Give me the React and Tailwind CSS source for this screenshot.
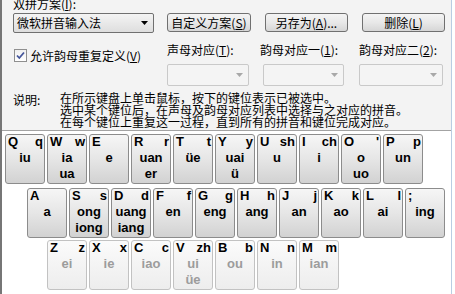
const cjk = "font-['Noto_Sans_CJK_SC',sans-serif]";

const row1 = [
  ["Q", "q", ["iu"]],
  ["W", "w", ["ia", "ua"]],
  ["E", "", ["e"]],
  ["R", "r", ["uan", "er"]],
  ["T", "t", ["üe"]],
  ["Y", "y", ["uai", "ü"]],
  ["U", "sh", ["u"]],
  ["I", "ch", ["i"]],
  ["O", "'", ["o", "uo"]],
  ["P", "p", ["un"]],
];
const row2 = [
  ["A", "", ["a"]],
  ["S", "s", ["ong", "iong"]],
  ["D", "d", ["uang", "iang"]],
  ["F", "f", ["en"]],
  ["G", "g", ["eng"]],
  ["H", "h", ["ang"]],
  ["J", "j", ["an"]],
  ["K", "k", ["ao"]],
  ["L", "l", ["ai"]],
  [";", "", ["ing"]],
];
const row3 = [
  ["Z", "z", ["ei"]],
  ["X", "x", ["ie"]],
  ["C", "c", ["iao"]],
  ["V", "zh", ["ui", "üe"]],
  ["B", "b", ["ou"]],
  ["N", "n", ["in"]],
  ["M", "m", ["ian"]],
];

const Key = ({ up, low, lines, faded }) => (
  <div
    className={
      faded
        ? "w-[40px] h-[50px] shrink-0 rounded-[3px] border border-[#c2c2c2] bg-linear-to-b from-[#fbfbfb] to-[#ededed] flex flex-col"
        : "w-[40px] h-[50px] shrink-0 rounded-[3px] border border-[#8c8c8c] bg-linear-to-b from-[#f6f6f6] via-[#e6e6e6] to-[#d2d2d2] flex flex-col"
    }
  >
    <div className="flex justify-between pl-[2px] pr-[1px] leading-[13px]">
      <span>{up}</span>
      <span>{low}</span>
    </div>
    <div
      className={
        faded
          ? "pt-[2px] flex flex-col items-center leading-[16px] text-[#9c9c9c]"
          : "pt-[2px] flex flex-col items-center leading-[16px]"
      }
    >
      {lines.map((l) => (
        <span key={l}>{l}</span>
      ))}
    </div>
  </div>
);

const Arrow = ({ color }) => (
  <svg width="7" height="4" viewBox="0 0 7 4">
    <path d="M0 0h7L3.5 4z" fill={color} />
  </svg>
);

const Btn = ({ children, w }) => (
  <div
    className={`${w} h-[19px] rounded-[3px] border border-[#707070] bg-linear-to-b from-[#f4f4f4] via-[#e8e8e8] to-[#d6d6d6] flex items-center justify-center leading-[12px]`}
  >
    {children}
  </div>
);

const DisabledCombo = ({ w }) => (
  <div
    className={`${w} h-[22px] mt-[8px] rounded-[2px] border border-[#c9c9c9] bg-[#f4f4f4] flex items-center justify-end pr-[5px]`}
  >
    <Arrow color="#a8a8a8" />
  </div>
);

const App = () => {
  return (
    <div className={`w-[455px] h-[294px] overflow-hidden bg-white text-[12px] text-black ${cjk}`}>
      <div className="w-[452px] h-[294px] border-l-2 border-l-[#767676] border-r border-r-[#b9cde3] flex flex-col">
        <div className="h-[130px] shrink-0 bg-[#f3f3f3] pl-[11px] flex flex-col">
          <div className="-mt-[2px] h-[12px] leading-[12px]">
            双拼方案(<span className="underline">I</span>):
          </div>
          <div className="mt-[3px] flex items-start">
            <div className="w-[141px] h-[20px] rounded-[2px] border border-[#707070] bg-linear-to-b from-[#f4f4f4] to-[#dedede] flex items-center justify-between pl-[3px] pr-[5px] leading-[12px]">
              <span>微软拼音输入法</span>
              <Arrow color="#000" />
            </div>
            <div className="ml-[13px] flex gap-[14px]">
              <Btn w="w-[84px]">
                自定义方案(<span className="underline">S</span>)
              </Btn>
              <Btn w="w-[83px]">
                另存为(<span className="underline">A</span>)...
              </Btn>
              <Btn w="w-[83px]">
                删除(<span className="underline">L</span>)
              </Btn>
            </div>
          </div>
          <div className="mt-[11px] flex items-start">
            <div className="w-[141px] mt-[5px] flex items-center gap-[3px] leading-[12px]">
              <div className="ml-[1px] w-[13px] h-[13px] border border-[#8f8f8f] bg-linear-to-b from-[#f0f0f0] to-[#ffffff] flex items-center justify-center">
                <svg width="9" height="9" viewBox="0 0 9 9">
                  <path d="M1 4.5l2.3 2.5L8 1.5" stroke="#44559a" strokeWidth="1.8" fill="none" />
                </svg>
              </div>
              <span>
                允许韵母重复定义(<span className="underline">V</span>)
              </span>
            </div>
            <div className="ml-[13px] flex gap-[14px]">
              <div className="w-[82px] flex flex-col">
                <div className="h-[12px] leading-[12px]">
                  声母对应(<span className="underline">T</span>):
                </div>
                <DisabledCombo w="w-[82px]" />
              </div>
              <div className="w-[82px] flex flex-col">
                <div className="h-[12px] leading-[12px] -ml-[3px]">
                  韵母对应一(<span className="underline">1</span>):
                </div>
                <DisabledCombo w="w-[81px]" />
              </div>
              <div className="w-[84px] flex flex-col">
                <div className="h-[12px] leading-[12px]">
                  韵母对应二(<span className="underline">2</span>):
                </div>
                <DisabledCombo w="w-[84px]" />
              </div>
            </div>
          </div>
          <div className="mt-[6px] flex leading-[12px]">
            <div className="w-[47px] mt-[2px]">说明:</div>
            <div className="flex flex-col">
              <span>在所示键盘上单击鼠标，按下的键位表示已被选中。</span>
              <span>选中某个键位后，在声母及韵母对应列表中选择与之对应的拼音。</span>
              <span>在每个键位上重复这一过程，直到所有的拼音和键位完成对应。</span>
            </div>
          </div>
        </div>
        <div className="flex-1 border-t border-t-[#a3a3a3] bg-white pt-[3px] flex flex-col font-['Liberation_Sans',Arial,sans-serif] font-bold text-[13px]">
          <div className="pl-[3px] flex gap-[2px]">
            {row1.map(([u, l, ls]) => (
              <Key key={u} up={u} low={l} lines={ls} />
            ))}
          </div>
          <div className="mt-[4px] pl-[25px] flex gap-[2px]">
            {row2.map(([u, l, ls]) => (
              <Key key={u} up={u} low={l} lines={ls} />
            ))}
          </div>
          <div className="mt-[2px] pl-[45px] flex gap-[2px]">
            {row3.map(([u, l, ls]) => (
              <Key key={u} up={u} low={l} lines={ls} faded />
            ))}
          </div>
        </div>
      </div>
    </div>
  );
};

export default App;
